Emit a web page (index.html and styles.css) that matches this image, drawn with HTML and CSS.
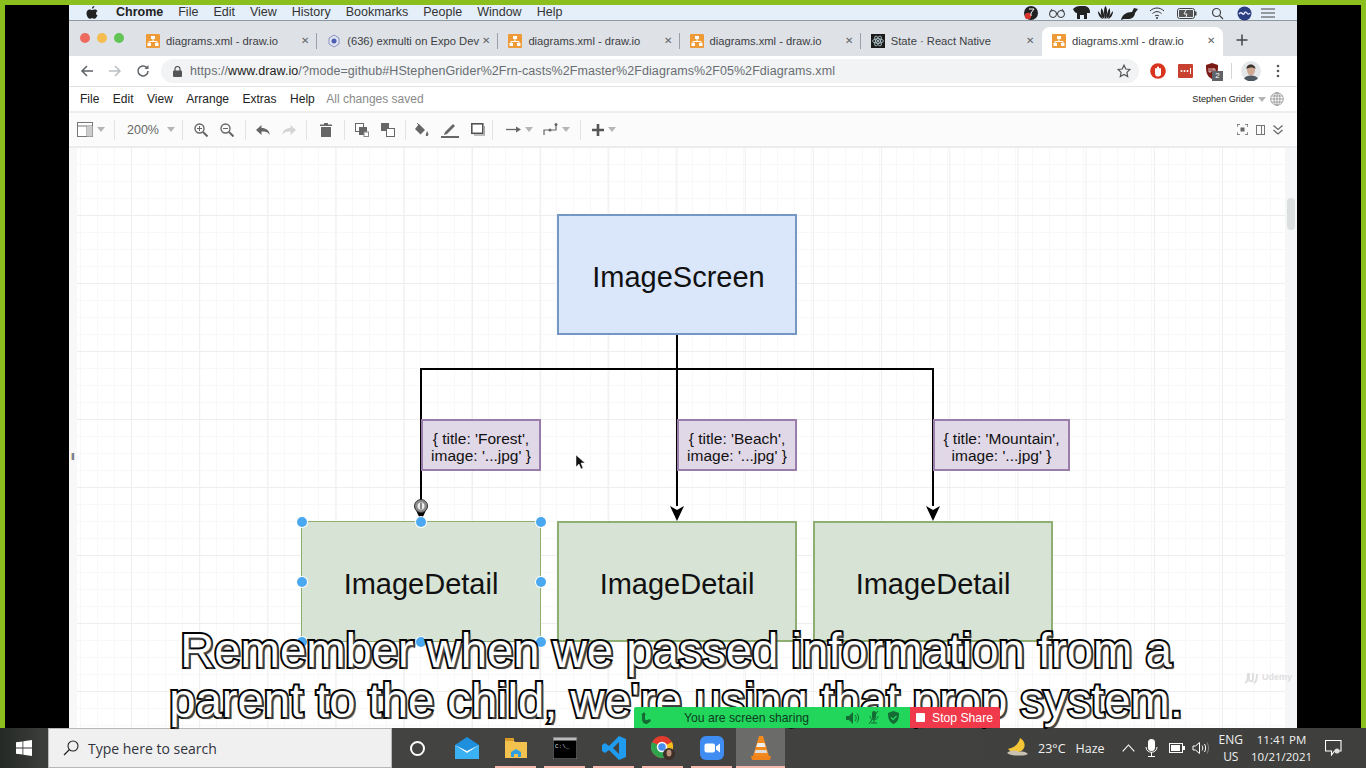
FILE: index.html
```html
<!DOCTYPE html>
<html lang="en">
<head>
  <meta charset="UTF-8" />
  <title>diagrams.xml - draw.io</title>
  <link rel="stylesheet" href="styles.css">
</head>
<body>

<svg class="sprites" width="0" height="0">
  <symbol id="drawio" viewBox="0 0 14 14">
    <rect width="14" height="14" rx="1" fill="#ee9a36"/>
    <path d="M7 4v3M3 10V7.5h8V10" stroke="#fff" stroke-width="1" fill="none"/>
    <rect x="5" y="2" width="4" height="3" fill="#fff"/>
    <rect x="1.5" y="9" width="3.5" height="3" fill="#fff"/>
    <rect x="9" y="9" width="3.5" height="3" fill="#fff"/>
  </symbol>
  <symbol id="caret" viewBox="0 0 8 5">
    <path d="M0 0h8L4 5z" fill="#b5b5b5"/>
  </symbol>
</svg>

<div class="screen">
  <div class="stage">
    <div class="browser">

      <div class="macbar">
        <div class="mac-menu">
          <svg class="apple" width="12" height="13" viewBox="0 0 12 13"><path d="M8.3 0c.1 1.400-1.100 2.700-2.400 2.600C5.800 1.300 7 .1 8.300 0zM11.500 9.200c-.6 1.500-1.800 3.600-3 3.600-1 0-1.300-.6-2.400-.6s-1.500.6-2.400.6C2.300 12.800.5 9.800.5 7.300c0-2.500 1.600-3.900 3.100-3.900 1 0 1.800.7 2.500.7.600 0 1.600-.8 2.800-.7.500 0 1.900.2 2.700 1.500-2.300 1.400-1.900 4.200.4 4.300z" fill="#222"/></svg>
          <span class="mac-app">Chrome</span>
          <span>File</span><span>Edit</span><span>View</span><span>History</span><span>Bookmarks</span><span>People</span><span>Window</span><span>Help</span>
        </div>
        <div class="mac-tray">
          <svg width="16" height="16" viewBox="0 0 16 16"><circle cx="8" cy="8" r="7" fill="#222"/><circle cx="5" cy="11" r="3.200" fill="#d8342b"/><path d="M6 4h5L8 8v3" stroke="#fff" fill="none"/></svg>
          <svg width="18" height="12" viewBox="0 0 18 12"><circle cx="5" cy="7" r="3.500" fill="none" stroke="#333"/><circle cx="13" cy="7" r="3.500" fill="none" stroke="#333"/><path d="M8.500 6h1M2 5l2-3M16 5l-2-3" stroke="#333"/></svg>
          <svg width="17" height="14" viewBox="0 0 17 14"><path d="M0 3c2-2 4-3 7-3h4c3 0 6 2 6 6v1h-3v6h-3V9H7v4H4V7C2 7 1 5 0 3z" fill="#222"/></svg>
          <svg width="19" height="14" viewBox="0 0 19 14"><path d="M9.500 0c2 2 2 9 0 13-2-4-2-11 0-13zM5.500 2c2 3 3 7 3 11C5 11 4 6 5.500 2zM13.500 2c-2 3-3 7-3 11 3.500-2 4.500-7 3-11zM2 5c2 2 4 5 5 8-3-1-5-4-5-8zM17 5c-2 2-4 5-5 8 3-1 5-4 5-8z" fill="#222"/></svg>
          <svg width="18" height="13" viewBox="0 0 18 13"><path d="M0 13c1-5 5-8 11-8l2-4 4 1-3 4c0 3-3 6-6 6H3z" fill="#222"/></svg>
          <svg width="16" height="12" viewBox="0 0 16 12"><path d="M1 4c4-4 10-4 14 0M3.500 6.500c3-2.500 6-2.500 9 0M6 9c1.300-1 2.700-1 4 0" stroke="#333" fill="none"/><circle cx="8" cy="11" r="1" fill="#333"/></svg>
          <svg width="20" height="11" viewBox="0 0 20 11"><rect x=".5" y=".5" width="17" height="10" rx="2" fill="none" stroke="#444"/><rect x="2" y="2" width="14" height="7" fill="#555"/><rect x="18" y="3.500" width="1.500" height="4" fill="#444"/><path d="M9 2L7 6h3L9 9" stroke="#eee" fill="none"/></svg>
          <svg width="13" height="13" viewBox="0 0 13 13"><circle cx="5.500" cy="5.500" r="4" fill="none" stroke="#444" stroke-width="1.200"/><path d="M8.500 8.500L12 12" stroke="#444" stroke-width="1.300"/></svg>
          <svg width="15" height="15" viewBox="0 0 15 15"><circle cx="7.500" cy="7.500" r="7" fill="#2b3f80"/><path d="M2 8c3-4 4 3 5.500-1s3 4 5.500 0" stroke="#e6e6ff" fill="none" stroke-width="1.400"/></svg>
          <svg width="14" height="10" viewBox="0 0 14 10"><path d="M0 1h14M0 5h14M0 9h14" stroke="#444" stroke-width="1.200"/></svg>
        </div>
      </div>

      <div class="tabstrip">
        <div class="lights"><i class="light red"></i><i class="light amber"></i><i class="light green"></i></div>
        <div class="tab"><svg class="fav"><use href="#drawio"/></svg><span class="tab-title">diagrams.xml - draw.io</span><span class="tab-x">✕</span></div>
        <div class="tab">
          <svg class="fav" viewBox="0 0 14 14"><path d="M7 1l5 3v6l-5 3-5-3V4z" fill="#dfe3f2" stroke="#8b93c0"/><circle cx="7" cy="7" r="2.500" fill="#4c5fb0"/></svg>
          <span class="tab-title">(636) exmulti on Expo Dev</span><span class="tab-x">✕</span>
        </div>
        <div class="tab"><svg class="fav"><use href="#drawio"/></svg><span class="tab-title">diagrams.xml - draw.io</span><span class="tab-x">✕</span></div>
        <div class="tab"><svg class="fav"><use href="#drawio"/></svg><span class="tab-title">diagrams.xml - draw.io</span><span class="tab-x">✕</span></div>
        <div class="tab">
          <svg class="fav" viewBox="0 0 14 14"><rect width="14" height="14" fill="#1a1a1a"/><g fill="none" stroke="#cfe8ee" stroke-width=".7"><ellipse cx="7" cy="7" rx="5.500" ry="2.200"/><ellipse cx="7" cy="7" rx="5.500" ry="2.200" transform="rotate(60 7 7)"/><ellipse cx="7" cy="7" rx="5.500" ry="2.200" transform="rotate(120 7 7)"/></g><circle cx="7" cy="7" r="1" fill="#cfe8ee"/></svg>
          <span class="tab-title">State · React Native</span><span class="tab-x">✕</span>
        </div>
        <div class="tab tab-active"><svg class="fav"><use href="#drawio"/></svg><span class="tab-title">diagrams.xml - draw.io</span><span class="tab-x">✕</span></div>
        <svg class="newtab" width="12" height="12" viewBox="0 0 12 12"><path d="M6 .5v11M.5 6h11" stroke="#444" stroke-width="1.500"/></svg>
      </div>

      <div class="addressrow">
        <svg class="nav" width="14" height="14" viewBox="0 0 14 14"><path d="M13 7H2M7 2L2 7l5 5" fill="none" stroke="#5f6368" stroke-width="1.500"/></svg>
        <svg class="nav" width="14" height="14" viewBox="0 0 14 14"><path d="M1 7h11M7 2l5 5-5 5" fill="none" stroke="#bcc0c4" stroke-width="1.500"/></svg>
        <svg class="nav" width="14" height="14" viewBox="0 0 14 14"><path d="M12 7a5 5 0 1 1-1.500-3.600" fill="none" stroke="#5f6368" stroke-width="1.500"/><path d="M12.500 1v4h-4z" fill="#5f6368"/></svg>
        <div class="omnibox">
          <svg width="9" height="11" viewBox="0 0 9 11"><rect y="4.500" width="9" height="6.500" rx="1" fill="#555"/><path d="M2 5V3a2.500 2.500 0 0 1 5 0v2" fill="none" stroke="#555" stroke-width="1.200"/></svg>
          <span class="url"><span class="url-dim">https://</span>www.draw.io<span class="url-dim">/?mode=github#HStephenGrider%2Frn-casts%2Fmaster%2Fdiagrams%2F05%2Fdiagrams.xml</span></span>
          <svg class="star" width="14" height="14" viewBox="0 0 14 14"><path d="M7 1.200l1.800 3.800 4.100.5-3 2.900.8 4.100L7 10.500l-3.700 2 .8-4.100-3-2.900 4.100-.5z" fill="none" stroke="#555" stroke-width="1.200"/></svg>
        </div>
        <div class="ext">
          <svg width="16" height="16" viewBox="0 0 16 16"><circle cx="8" cy="8" r="7.800" fill="#d9341f"/><path d="M5 11V6a1 1 0 0 1 2 0V4.500a1 1 0 0 1 2 0V6a1 1 0 0 1 2 0v4a3 3 0 0 1-6 1z" fill="#fff"/></svg>
          <svg width="15" height="14" viewBox="0 0 15 14"><rect width="15" height="14" rx="1" fill="#c8402f"/><circle cx="3.500" cy="7" r="1" fill="#fff"/><circle cx="6.500" cy="7" r="1" fill="#fff"/><circle cx="9.500" cy="7" r="1" fill="#fff"/><path d="M12.500 4v6" stroke="#fff"/></svg>
          <div class="ublock">
            <svg width="14" height="16" viewBox="0 0 14 16"><path d="M7 0l6 2c0 6 0 11-6 14C1 13 1 8 1 2z" fill="#7c1a16"/><path d="M4 5v4h2V5M8 5v4h2V6H8" stroke="#eee" fill="none" stroke-width=".8"/></svg>
            <span class="ublock-badge">2</span>
          </div>
          <i class="ext-sep"></i>
          <svg class="avatar" width="20" height="20" viewBox="0 0 20 20"><circle cx="10" cy="10" r="10" fill="#e4e7ea"/><ellipse cx="10" cy="9" rx="4" ry="5.500" fill="#cfa893"/><path d="M5.500 8c-.5-6 9-6 9 0-2-2-6-2-9 0z" fill="#3b3430"/><path d="M3 17.500c2-4 12-4 14 0a10 10 0 0 1-14 0z" fill="#4d5862"/></svg>
          <svg class="dots" width="4" height="14" viewBox="0 0 4 14"><circle cx="2" cy="2" r="1.300" fill="#555"/><circle cx="2" cy="7" r="1.300" fill="#555"/><circle cx="2" cy="12" r="1.300" fill="#555"/></svg>
        </div>
      </div>

      <div class="menurow">
        <div class="menu-items">
          <span>File</span><span>Edit</span><span>View</span><span>Arrange</span><span>Extras</span><span>Help</span><span class="saved">All changes saved</span>
        </div>
        <div class="menu-user">
          <span>Stephen Grider</span>
          <svg class="caret"><use href="#caret"/></svg>
          <svg width="14" height="14" viewBox="0 0 14 14"><g fill="none" stroke="#8e8e8e" stroke-width=".8"><circle cx="7" cy="7" r="6.300"/><ellipse cx="7" cy="7" rx="3" ry="6.300"/><path d="M7 .7v12.600M.7 7h12.600M1.500 4h11M1.500 10h11"/></g></svg>
        </div>
      </div>

      <div class="toolbar">
        <div class="tools">
          <div class="tool-group">
            <svg width="16" height="15" viewBox="0 0 16 15"><rect x=".5" y=".5" width="15" height="14" fill="#fff" stroke="#777"/><path d="M.5 4h15M10 4v10.500" stroke="#777"/><rect x="10" y="4" width="5.500" height="10.500" fill="#ccc"/></svg>
            <svg class="caret"><use href="#caret"/></svg>
          </div>
          <div class="tool-group zoom-group"><span class="zoom-level">200%</span><svg class="caret"><use href="#caret"/></svg></div>
          <div class="tool-group spaced">
            <svg width="14" height="14" viewBox="0 0 14 14"><circle cx="5.500" cy="5.500" r="4.500" fill="none" stroke="#666" stroke-width="1.400"/><path d="M9 9l4.500 4.500" stroke="#666" stroke-width="2"/><path d="M3 5.500h5M5.500 3v5" stroke="#666"/></svg>
            <svg width="14" height="14" viewBox="0 0 14 14"><circle cx="5.500" cy="5.500" r="4.500" fill="none" stroke="#666" stroke-width="1.400"/><path d="M9 9l4.500 4.500" stroke="#666" stroke-width="2"/><path d="M3 5.500h5" stroke="#666"/></svg>
          </div>
          <div class="tool-group spaced">
            <svg width="14" height="10" viewBox="0 0 14 10"><path d="M5.500 0v3C10 3 13 5 14 10c-2-3-4.500-3.500-8.500-3.500V10L0 5z" fill="#666"/></svg>
            <svg width="14" height="10" viewBox="0 0 14 10"><path d="M8.500 0v3C4 3 1 5 0 10c2-3 4.500-3.500 8.500-3.500V10L14 5z" fill="#d4d4d4"/></svg>
          </div>
          <div class="tool-group">
            <svg width="12" height="14" viewBox="0 0 12 14"><path d="M0 1.500h12V3H0zM4 0h4v1.500H4zM1 4h10v10H1z" fill="#666"/></svg>
          </div>
          <div class="tool-group spaced">
            <svg width="14" height="14" viewBox="0 0 14 14"><rect x=".5" y=".5" width="8" height="8" fill="#fff" stroke="#666"/><rect x="4" y="4" width="8" height="8" fill="#666"/><rect x="9" y="9" width="4.500" height="4.500" fill="#fff" stroke="#888"/></svg>
            <svg width="14" height="14" viewBox="0 0 14 14"><rect x="0" y="0" width="8" height="8" fill="#666"/><rect x="5.500" y="5.500" width="8" height="8" fill="#fff" stroke="#666"/></svg>
          </div>
          <div class="tool-group spaced">
            <svg width="15" height="14" viewBox="0 0 15 14"><path d="M5 1l6 6-4.500 4.500L1 6z" fill="#666"/><path d="M3 0l3 3" stroke="#666"/><path d="M13 8c1 2 2 3 1 4.500s-3 0-2-1.500z" fill="#666"/></svg>
            <svg width="18" height="16" viewBox="0 0 18 16"><path d="M4 10l8-8 2 2-8 8-3 1z" fill="#666"/><rect y="14" width="18" height="2" fill="#666"/></svg>
            <svg width="14" height="13" viewBox="0 0 14 13"><rect x=".8" y=".8" width="11" height="9.500" fill="#fff" stroke="#555" stroke-width="1.600"/><path d="M3 12h10.500V3" fill="none" stroke="#aaa" stroke-width="1.600"/></svg>
          </div>
          <div class="tool-group spaced wide">
            <span class="tool-drop"><svg width="15" height="7" viewBox="0 0 15 7"><path d="M0 3.500h11" stroke="#666" stroke-width="1.300"/><path d="M10 .5l5 3-5 3z" fill="#666"/></svg><svg class="caret"><use href="#caret"/></svg></span>
            <span class="tool-drop"><svg width="15" height="13" viewBox="0 0 15 13"><path d="M1 12V7h12V1" fill="none" stroke="#666" stroke-width="1.200"/><circle cx="7" cy="7" r="1.500" fill="#666"/><circle cx="13" cy="1.500" r="1.500" fill="#666"/></svg><svg class="caret"><use href="#caret"/></svg></span>
          </div>
          <div class="tool-group last">
            <svg width="12" height="12" viewBox="0 0 12 12"><path d="M6 0v12M0 6h12" stroke="#555" stroke-width="2.600"/></svg>
            <svg class="caret"><use href="#caret"/></svg>
          </div>
        </div>
        <div class="tools-right">
          <svg width="11" height="11" viewBox="0 0 11 11"><path d="M0 3V0h3M8 0h3v3M11 8v3H8M3 11H0V8" fill="none" stroke="#666" stroke-width="1.300"/><rect x="3.500" y="3.500" width="4" height="4" fill="#666"/></svg>
          <svg width="9" height="10" viewBox="0 0 9 10"><rect x=".5" y=".5" width="8" height="9" fill="none" stroke="#777"/><path d="M5.500 .5v9" stroke="#777"/></svg>
          <svg width="10" height="10" viewBox="0 0 10 10"><path d="M.5 .5L5 4.500 9.500 .5M.5 5L5 9l4.500-4" fill="none" stroke="#666" stroke-width="1.200"/></svg>
        </div>
      </div>

      <div class="canvas">
        <div class="sheet"></div>
        <div class="scrolltrack"><div class="scrollthumb"></div></div>
        <span class="pane-grip">‖</span>

        <svg class="wires" width="1228" height="580" viewBox="0 0 1228 580">
          <path d="M608 187V358M352 358V221H864V358" fill="none" stroke="#000" stroke-width="2"/>
          <path d="M345 358l7 15 7-15-7 4z" fill="#000"/>
          <path d="M601 358l7 15 7-15-7 4z" fill="#000"/>
          <path d="M857 358l7 15 7-15-7 4z" fill="#000"/>
          <circle cx="352" cy="358" r="6.500" fill="#8d8d8d" stroke="#333"/>
          <circle cx="352" cy="358" r="3.500" fill="#eee"/>
          <path d="M352 355v6" stroke="#222"/>
        </svg>

        <div class="node node-blue node-screen">ImageScreen</div>
        <div class="node node-purple node-label label-forest">{ title: 'Forest',<br>image: '...jpg' }</div>
        <div class="node node-purple node-label label-beach">{ title: 'Beach',<br>image: '...jpg' }</div>
        <div class="node node-purple node-label label-mountain">{ title: 'Mountain',<br>image: '...jpg' }</div>
        <div class="node node-green node-detail detail-one is-selected">ImageDetail
          <i class="handle h-tl"></i><i class="handle h-tc"></i><i class="handle h-tr"></i>
          <i class="handle h-ml"></i><i class="handle h-mr"></i>
          <i class="handle h-bl"></i><i class="handle h-bc"></i><i class="handle h-br"></i>
        </div>
        <div class="node node-green node-detail detail-two">ImageDetail</div>
        <div class="node node-green node-detail detail-three">ImageDetail</div>

        <svg class="pointer" width="10" height="15" viewBox="0 0 10 15"><path d="M1 0v12l3-3 2 5 2-1-2-5h4z" fill="#111" stroke="#fff" stroke-width=".5"/></svg>

        <div class="udemy">
          <svg width="16" height="16" viewBox="0 0 16 16"><path d="M2 14c3-1 3-7 3-10M6 4v6c0 3 4 3 4 0V4M11 14c2-1 3-5 3-9" fill="none" stroke="#dfdfdf" stroke-width="2"/></svg>
          <span>Udemy</span>
        </div>
      </div>

    </div>

    <div class="caption">Remember when we passed information from a<br>parent to the child, we're using that prop system.</div>

    <div class="sharebar">
      <div class="share-info">
        <svg width="10" height="12" viewBox="0 0 10 12"><path d="M3 0l2 3H4v4c0 1 1 1 2 1l3-1 1 2-4 3C3 12 1 10 1 7V3H0z" fill="#146b33"/></svg>
        <span class="share-text">You are screen sharing</span>
        <svg width="13" height="12" viewBox="0 0 13 12"><path d="M0 4h3l4-4v12L3 8H0z" fill="#146b33"/><path d="M9 3c1.500 2 1.500 4 0 6M11 1.500c2 3 2 6 0 9" fill="none" stroke="#146b33"/></svg>
        <svg width="11" height="13" viewBox="0 0 11 13"><rect x="4" y="0" width="4" height="8" rx="2" fill="#146b33"/><path d="M2 5c0 5 8 5 8 0M6 9v3M3 12h6M1 13L10 0" fill="none" stroke="#146b33"/></svg>
        <svg width="11" height="13" viewBox="0 0 11 13"><path d="M5.500 0L11 2c0 5-1 9-5.500 11C1 11 0 7 0 2z" fill="#146b33"/><path d="M3 6.500l2 2 3.500-3.500" fill="none" stroke="#22d65c" stroke-width="1.300"/></svg>
      </div>
      <div class="share-stop"><i class="stop-square"></i><span>Stop Share</span></div>
    </div>
  </div>

  <div class="taskbar">
    <div class="start">
      <svg width="16" height="16" viewBox="0 0 16 16"><path d="M0 2.300l6.500-.9v6.200H0zM7.300 1.300L16 0v7.600H7.300zM0 8.400h6.500v6.200L0 13.700zM7.300 8.400H16V16l-8.700-1.200z" fill="#fff"/></svg>
    </div>
    <div class="searchbox">
      <svg width="16" height="16" viewBox="0 0 16 16"><circle cx="10" cy="6" r="5" fill="none" stroke="#222" stroke-width="1.100"/><path d="M6.500 9.500L1 15" stroke="#222" stroke-width="1.200"/></svg>
      <span>Type here to search</span>
    </div>
    <div class="apps">
      <div class="app app-first"><i class="cortana"></i></div>
      <div class="app">
        <svg width="24" height="22" viewBox="0 0 24 22"><path d="M0 8L12 0l12 8v14H0z" fill="#1d8fdc"/><path d="M0 8l12 8 12-8v14H0z" fill="#39b1f2"/><path d="M0 8l12 8 12-8-12 6z" fill="#fff"/></svg>
      </div>
      <div class="app running">
        <svg width="22" height="20" viewBox="0 0 22 20"><path d="M0 2h8l2 2h12v16H0z" fill="#f2c14e"/><rect y="0" width="9" height="3" fill="#d99c28"/><path d="M6 19v-5l5-3 5 3v5h-3v-3H9v3z" fill="#2f9fe0"/></svg>
      </div>
      <div class="app running">
        <svg width="24" height="22" viewBox="0 0 24 22"><rect width="24" height="22" fill="#000" stroke="#999"/><rect x=".5" y=".5" width="23" height="3" fill="#bbb"/><text x="2" y="11" class="cmd-text">C:\_</text></svg>
      </div>
      <div class="app running">
        <svg width="24" height="24" viewBox="0 0 24 24"><path d="M17 0l7 3v18l-7 3L7 14l-4 3-3-2V9l3-2 4 3zM17 6l-6 6 6 6z" fill="#1f9cf0"/></svg>
      </div>
      <div class="app running">
        <svg width="24" height="24" viewBox="0 0 24 24"><circle cx="11" cy="11" r="11" fill="#e33b2e"/><path d="M11 11L21 6a11 11 0 0 1-6 15z" fill="#f6c01c"/><path d="M11 11l4 10A11 11 0 0 1 1 6z" fill="#2ea44f"/><circle cx="11" cy="11" r="4.500" fill="#4a8ef0" stroke="#fff" stroke-width="1.500"/><circle cx="18" cy="18" r="6" fill="#3b2f28"/><ellipse cx="18" cy="17" rx="2.500" ry="3.500" fill="#bb9078"/></svg>
      </div>
      <div class="app running">
        <svg width="24" height="24" viewBox="0 0 24 24"><rect width="24" height="24" rx="6" fill="#3f8cf3"/><rect x="4.500" y="7.500" width="10.500" height="9" rx="2" fill="#fff"/><path d="M16 10.500l4-3v9l-4-3z" fill="#fff"/></svg>
      </div>
      <div class="app running active">
        <svg width="20" height="24" viewBox="0 0 20 24"><path d="M8 0h4l6 20H2z" fill="#f48a1e"/><path d="M6.500 7h7l1.200 4H5.300z" fill="#eee"/><path d="M4.500 14h11l.8 3H3.700z" fill="#ddd"/><path d="M0 20h20l-1 4H1z" fill="#f0831a"/></svg>
      </div>
    </div>
    <div class="tray">
      <svg width="24" height="22" viewBox="0 0 24 22"><path d="M14 1c-1 5-5 10-12 11 4 5 14 4 16-1s-1-8-4-10z" fill="#f4c534"/><path d="M1 16c4-3 9-3 12-1 4-1 7 0 9 2-2 1-4 1.500-8 1.500-6 0-10 0-13-2.500z" fill="#c9c2b2"/></svg>
      <span class="temp">23°C</span>
      <span class="haze">Haze</span>
      <svg class="tray-chevron" width="13" height="8" viewBox="0 0 13 8"><path d="M.7 7.300L6.500 1l5.800 6.300" fill="none" stroke="#fff" stroke-width="1.100"/></svg>
      <svg class="tray-mic" width="13" height="18" viewBox="0 0 13 18"><rect x="3" y="0" width="7" height="12" rx="3.500" fill="#fff"/><path d="M1 8c0 7 11 7 11 0M6.500 13v4M3 17.500h7" fill="none" stroke="#fff"/></svg>
      <svg class="tray-battery" width="16" height="10" viewBox="0 0 16 10"><rect x=".5" y=".5" width="13" height="9" fill="none" stroke="#fff"/><rect x="2" y="2" width="9" height="6" fill="#fff"/><rect x="14" y="3" width="2" height="4" fill="#fff"/></svg>
      <svg class="tray-sound" width="17" height="14" viewBox="0 0 17 14"><path d="M1 5h2.500L7.500 1.500v11L3.500 9H1z" fill="none" stroke="#fff"/><path d="M10 4.500c1 1.500 1 3.500 0 5M12.500 3c1.500 2.500 1.500 5.500 0 8" fill="none" stroke="#fff"/><path d="M15 1.500c2 3.500 2 7.500 0 11" fill="none" stroke="#888"/></svg>
      <div class="lang"><span>ENG</span><span>US</span></div>
      <div class="clock"><span>11:41 PM</span><span>10/21/2021</span></div>
      <svg class="notify" width="17" height="16" viewBox="0 0 17 16"><path d="M.5 .5h15.500v10.500H9.500l-3 4V11H.5z" fill="none" stroke="#fff" stroke-width="1.100"/><circle cx="12" cy="11" r="2.500" fill="#ddd"/></svg>
    </div>
  </div>
</div>

</body>
</html>
```

FILE: styles.css
```css
* {
  box-sizing: border-box;
}
body {
  margin: 0;
  font-family: "Liberation Sans", Arial, sans-serif;
  background: #000;
}
.sprites {
  position: absolute;
}
.screen {
  width: 1366px;
  height: 768px;
  overflow: hidden;
  display: flex;
  flex-direction: column;
}
.stage {
  position: relative;
  height: 728px;
  padding: 0 64px;
  background: #000;
  border: solid #8abf1e;
  border-width: 5px 5px 0 5px;
}
.browser {
  height: 723px;
  display: flex;
  flex-direction: column;
  background: #fff;
}

/* mac menu bar */
.macbar {
  height: 16px;
  flex: none;
  display: flex;
  justify-content: space-between;
  align-items: flex-start;
  padding: 0 17px 0 17px;
  background: #e5eff9;
  border-bottom: 1px solid #8f979f;
  font-size: 12.500px;
  line-height: 14px;
  color: #333;
}
.mac-menu {
  display: flex;
  align-items: center;
  gap: 15px;
}
.apple {
  margin-right: 3px;
}
.mac-app {
  font-weight: bold;
  color: #222;
}
.mac-tray {
  display: grid;
  grid-template-columns: 26px 26px 22px 26px 24px 30px 30px 30px 24px 24px;
  justify-items: center;
  align-items: center;
  height: 14px;
}

/* tabs */
.tabstrip {
  height: 35px;
  flex: none;
  display: flex;
  align-items: flex-end;
  background: #dee1e6;
}
.lights {
  width: 67px;
  height: 35px;
  display: flex;
  align-items: center;
  gap: 7px;
  padding: 0 0 2px 11px;
}
.light {
  width: 10px;
  height: 10px;
  border-radius: 50%;
}
.red { background: #ee6a5f; }
.amber { background: #f5bd4f; }
.green { background: #61c454; }
.tab {
  width: 181.200px;
  height: 29px;
  display: flex;
  align-items: center;
  padding: 0 6px 2px 10px;
  font-size: 11.200px;
  color: #3c4043;
  position: relative;
}
.tab::after {
  content: "";
  position: absolute;
  right: 0;
  top: 6px;
  height: 16px;
  width: 1px;
  background: #9aa0a6;
}
.tab-active {
  background: #fff;
  border-radius: 8px 8px 0 0;
}
.tab-active::after,
.tab:nth-child(6)::after {
  display: none;
}
.fav {
  width: 14px;
  height: 14px;
  flex: none;
  margin-right: 6px;
}
.tab-title {
  flex: 1;
  white-space: nowrap;
}
.tab-x {
  width: 12px;
  font-size: 10px;
  color: #5f6368;
  text-align: center;
  flex: none;
}
.newtab {
  margin: 0 0 10px 13px;
}

/* address row */
.addressrow {
  height: 31px;
  flex: none;
  display: flex;
  align-items: center;
  padding: 0 0 0 11px;
  background: #fff;
  border-bottom: 1px solid #e3e3e3;
}
.nav {
  margin-right: 14px;
  flex: none;
}
.omnibox {
  width: 978px;
  height: 24px;
  margin-left: -3px;
  display: flex;
  align-items: center;
  gap: 8px;
  padding: 0 8px 0 12px;
  border-radius: 12px;
  background: #f1f3f4;
  font-size: 12.500px;
  color: #222;
}
.url {
  flex: 1;
  letter-spacing: 0.070px;
  white-space: nowrap;
}
.url-dim {
  color: #6a6e73;
}
.ext {
  flex: 1;
  display: flex;
  align-items: center;
  gap: 12px;
  padding-left: 11px;
}
.ublock {
  position: relative;
  display: flex;
}
.ublock-badge {
  position: absolute;
  left: 7px;
  top: 8px;
  width: 11px;
  height: 10px;
  background: #5f6368;
  color: #fff;
  font-size: 8px;
  line-height: 10px;
  text-align: center;
}
.ext-sep {
  width: 1px;
  height: 16px;
  background: #d5d5d5;
}
.avatar {
  margin-left: -3px;
}
.dots {
  margin-left: 3px;
}

/* draw.io menus */
.menurow {
  height: 26px;
  flex: none;
  display: flex;
  justify-content: space-between;
  align-items: center;
  padding: 0 13px 0 11px;
  background: #fff;
  border-bottom: 2px solid #eeeeee;
  font-size: 12px;
  color: #222;
}
.menu-items {
  display: flex;
  gap: 13.500px;
}
.saved {
  color: #8a8a8a;
  margin-left: -2px;
}
.menu-user {
  display: flex;
  align-items: center;
  gap: 4px;
  font-size: 9.100px;
}
.caret {
  width: 8px;
  height: 5px;
}
.toolbar {
  height: 35px;
  flex: none;
  display: flex;
  justify-content: space-between;
  align-items: center;
  padding: 0 14px 0 8px;
  background: #fbfbfb;
  border-bottom: 2px solid #ececec;
}
.tools {
  display: grid;
  grid-template-columns: 38px 68px 63px 61px 38px 61px 87px 88px 40px;
  align-items: center;
}
.tool-group {
  height: 20px;
  display: flex;
  align-items: center;
  justify-content: center;
  gap: 4px;
  border-right: 1px solid #e2e2e2;
}
.tool-group:first-child {
  justify-content: flex-start;
}
.tool-group.zoom-group {
  justify-content: flex-start;
  padding-left: 12px;
}
.tool-group.spaced {
  gap: 12px;
}
.tool-group.wide {
  gap: 10px;
  padding-left: 2px;
}
.tool-group.last {
  border-right: 0;
  justify-content: flex-start;
  padding-left: 11px;
}
.tool-drop {
  display: flex;
  align-items: center;
  gap: 4px;
}
.zoom-level {
  font-size: 12.500px;
  color: #666;
  margin-right: 4px;
}
.tools-right {
  display: flex;
  align-items: center;
  gap: 8px;
}

/* drawing area */
.canvas {
  position: relative;
  flex: 1;
  overflow: hidden;
  background: #f8f8f8;
}
.sheet {
  position: absolute;
  left: 8px;
  top: 0;
  bottom: 0;
  right: 12px;
  background-color: #fff;
  background-image:
    linear-gradient(#eeeeee 1px, transparent 1px),
    linear-gradient(90deg, #eeeeee 1px, transparent 1px),
    linear-gradient(#f8f8f8 1px, transparent 1px),
    linear-gradient(90deg, #f8f8f8 1px, transparent 1px);
  background-size: 68.200px 68px, 68.200px 68px, 17px 17px, 17px 17px;
  background-position: 0 67px, 54px 0, 0 16px, 3px 0;
}
.scrolltrack {
  position: absolute;
  right: 0;
  top: 0;
  bottom: 0;
  width: 12px;
  background: #f5f6f8;
}
.scrollthumb {
  position: absolute;
  left: 2px;
  top: 50px;
  width: 8px;
  height: 32px;
  border-radius: 4px;
  background: #dcdfe0;
}
.pane-grip {
  position: absolute;
  left: 2px;
  top: 304px;
  font-size: 9px;
  color: #333;
}
.wires {
  position: absolute;
  left: 0;
  top: 0;
}
.node {
  position: absolute;
  display: flex;
  align-items: center;
  justify-content: center;
  text-align: center;
  border: 2px solid;
  color: #111;
}
.node-blue {
  background: #dae7fa;
  border-color: #7497c4;
}
.node-green {
  background: #d7e3d5;
  border-color: #8eae74;
}
.node-purple {
  background: #e0d7e7;
  border-color: #9a7dab;
}
.node-screen,
.node-detail {
  width: 240px;
  height: 121px;
  padding-top: 6px;
  font-size: 29px;
}
.node-screen {
  left: 488px;
  top: 66px;
  padding-left: 3px;
}
.node-detail {
  top: 373px;
}
.detail-one { left: 232px; }
.detail-two { left: 488px; }
.detail-three { left: 744px; }
.is-selected {
  border: 1px dashed #4aa3ea;
  outline: 1px solid #8eae74;
  outline-offset: -1px;
}
.node-label {
  top: 271px;
  height: 52px;
  padding-top: 3px;
  font-size: 15.500px;
  line-height: 17px;
}
.label-forest { left: 352px; width: 120px; }
.label-beach { left: 608px; width: 120px; }
.label-mountain { left: 864px; width: 137px; }
.handle {
  position: absolute;
  width: 10px;
  height: 10px;
  border-radius: 50%;
  background: #4aa8f0;
  box-shadow: 0 0 0 1px #fff;
}
.h-tl { left: -5px; top: -5px; }
.h-tc { left: 114px; top: -5px; }
.h-tr { left: 234px; top: -5px; }
.h-ml { left: -5px; top: 55px; }
.h-mr { left: 234px; top: 55px; }
.h-bl { left: -5px; top: 115px; }
.h-bc { left: 114px; top: 115px; }
.h-br { left: 234px; top: 115px; }
.pointer {
  position: absolute;
  left: 506px;
  top: 307px;
}
.udemy {
  position: absolute;
  left: 1174px;
  top: 521px;
  display: flex;
  align-items: center;
  gap: 3px;
  font-size: 9px;
  font-weight: bold;
  color: #dedede;
}

/* subtitle and zoom bar, over the page */
.caption {
  position: absolute;
  left: 63px;
  top: 621px;
  width: 1216px;
  text-align: center;
  font-size: 47.200px;
  line-height: 50px;
  color: #fff;
  -webkit-text-stroke: 4px #000;
  paint-order: stroke fill;
  text-shadow: 2px 2px 1px #444;
  white-space: nowrap;
}
.sharebar {
  position: absolute;
  left: 629px;
  top: 702px;
  width: 366px;
  height: 21px;
  display: flex;
  font-size: 12.200px;
}
.share-info {
  width: 276px;
  display: flex;
  align-items: center;
  gap: 9px;
  padding: 0 11px 0 7px;
  background: #22d65c;
  border-radius: 2px 0 0 0;
  color: #0f3b22;
}
.share-text {
  flex: 1;
  text-align: center;
  padding-right: 4px;
}
.share-stop {
  flex: 1;
  display: flex;
  align-items: center;
  gap: 7px;
  padding-left: 6px;
  background: #f0394a;
  border-radius: 0 2px 0 0;
  color: #fff;
}
.stop-square {
  width: 9px;
  height: 9px;
  border-radius: 1px;
  background: #fff;
}

/* windows taskbar */
.taskbar {
  height: 40px;
  flex: none;
  display: flex;
  align-items: center;
  background: linear-gradient(90deg, #252925 0, #3a3c39 3%, #434441 30%, #3f403d 100%);
  color: #fff;
}
.start {
  width: 48px;
  display: flex;
  justify-content: center;
}
.searchbox {
  width: 344px;
  height: 40px;
  display: flex;
  align-items: center;
  gap: 9px;
  padding-left: 14px;
  background: #f0f0f0;
  border: 1px solid #b8b8b8;
  font-family: "Open Sans", sans-serif;
  font-size: 14px;
  color: #30343c;
}
.apps {
  display: flex;
  height: 40px;
}
.app {
  position: relative;
  width: 49px;
  height: 40px;
  display: flex;
  align-items: center;
  justify-content: center;
}
.app-first {
  width: 50px;
}
.app.running::after {
  content: "";
  position: absolute;
  left: 4px;
  right: 4px;
  bottom: 0;
  height: 2px;
  background: #f7b8ae;
}
.app.active {
  background: #6b6b69;
}
.app.active::after {
  left: 0;
  right: 0;
}
.cortana {
  width: 15px;
  height: 15px;
  border: 2px solid #fff;
  border-radius: 50%;
}
.cmd-text {
  font-family: "Liberation Mono", monospace;
  font-size: 6px;
  fill: #ddd;
}
.tray {
  flex: 1;
  display: flex;
  align-items: center;
  padding-left: 221px;
  font-family: "Open Sans", sans-serif;
  font-size: 12.500px;
  color: #f0f0f0;
}
.temp {
  margin-left: 8px;
}
.haze {
  margin-left: 10px;
}
.tray-chevron {
  margin-left: 17px;
}
.tray-mic {
  margin-left: 10px;
}
.tray-battery {
  margin-left: 11px;
}
.tray-sound {
  margin-left: 7px;
}
.lang,
.clock {
  display: flex;
  flex-direction: column;
  align-items: center;
  line-height: 17px;
  font-size: 12px;
}
.lang {
  margin-left: 10px;
}
.clock {
  margin-left: 8px;
  font-size: 11.500px;
}
.notify {
  margin-left: 13px;
}
```
